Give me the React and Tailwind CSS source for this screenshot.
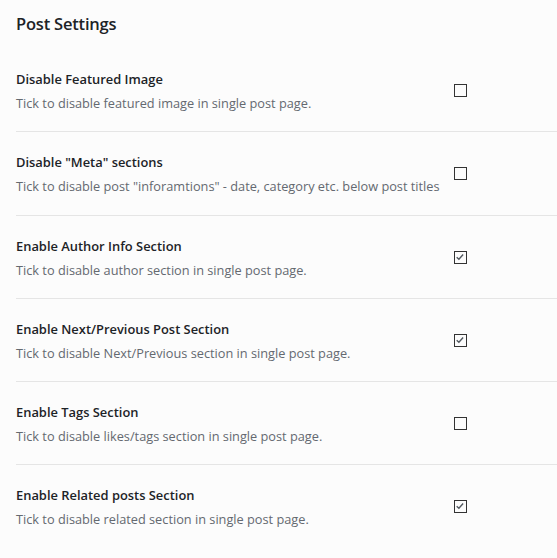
const settings = [
  {
    label: "Disable Featured Image",
    desc: "Tick to disable featured image in single post page.",
    checked: false,
  },
  {
    label: 'Disable "Meta" sections',
    desc: 'Tick to disable post "inforamtions" - date, category etc. below post titles',
    checked: false,
  },
  {
    label: "Enable Author Info Section",
    desc: "Tick to disable author section in single post page.",
    checked: true,
  },
  {
    label: "Enable Next/Previous Post Section",
    desc: "Tick to disable Next/Previous section in single post page.",
    checked: true,
  },
  {
    label: "Enable Tags Section",
    desc: "Tick to disable likes/tags section in single post page.",
    checked: false,
  },
  {
    label: "Enable Related posts Section",
    desc: "Tick to disable related section in single post page.",
    checked: true,
  },
];

function Box({ checked }) {
  return (
    <span className="block w-[13px] h-[13px] border border-[#333] bg-[#fcfcfc]">
      {checked && (
        <svg viewBox="0 0 13 13" className="w-[11px] h-[11px]">
          <path
            d="M2 6.2 L4.6 8.6 L9.6 3"
            fill="none"
            stroke="#50575e"
            strokeWidth="1.6"
          />
        </svg>
      )}
    </span>
  );
}

export default function App() {
  return (
    <div
      className="min-h-[558px] bg-[#fcfcfc] pl-4 pt-[12px]"
      style={{ fontFamily: '"Open Sans", "Noto Sans", sans-serif' }}
    >
      <h2 className="text-[16.5px] tracking-[-0.2px] font-semibold leading-6 text-[#1d2327] h-[37px]">
        Post Settings
      </h2>
      {settings.map((s, i) => (
        <div
          key={i}
          className={`flex h-[83.3px] ${i < settings.length - 1 ? "border-b border-[#e5e5e5]" : ""}`}
        >
          <div className="w-[438px] pt-[20px]">
            <div className="text-[12.9px] font-semibold leading-5 text-[#1d2327]">
              {s.label}
            </div>
            <div className="mt-[5px] text-[12.75px] leading-[18px] text-[#646970] whitespace-nowrap">
              {s.desc}
            </div>
          </div>
          <div className="pt-[35px]">
            <Box checked={s.checked} />
          </div>
        </div>
      ))}
    </div>
  );
}
